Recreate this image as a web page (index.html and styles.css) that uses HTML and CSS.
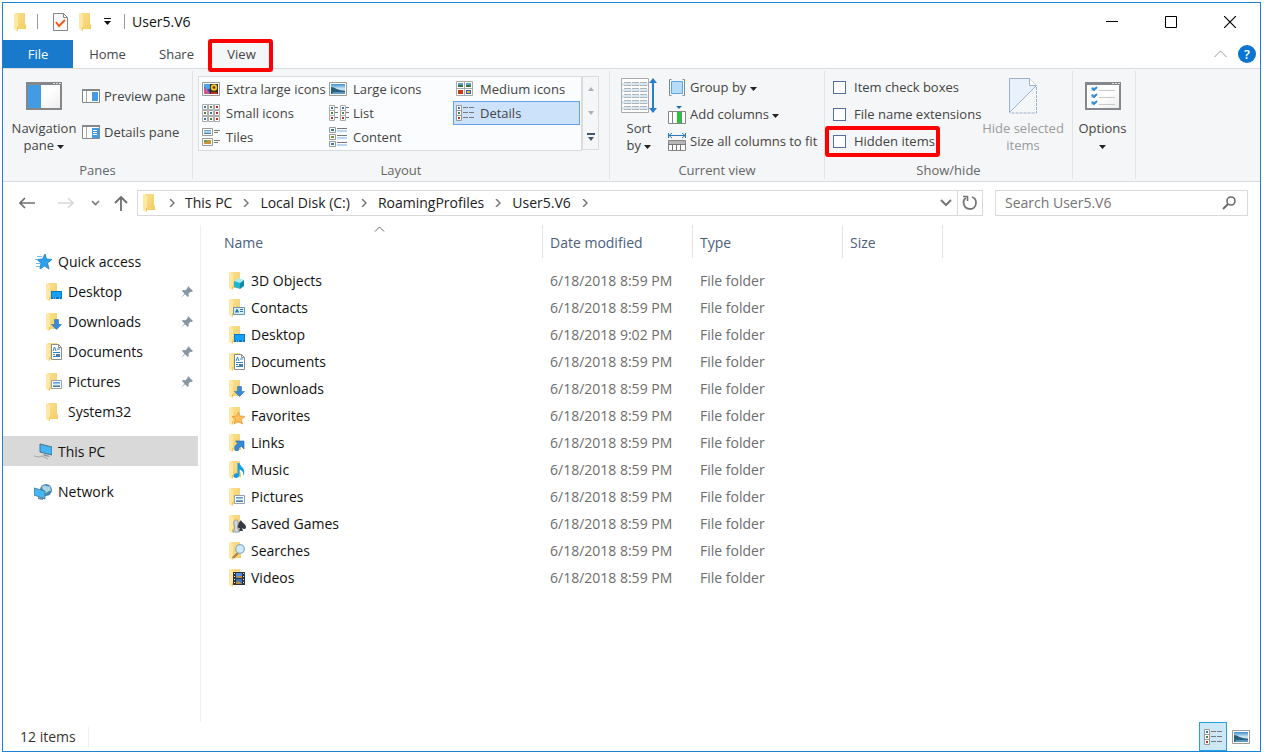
FILE: index.html
```html
<!DOCTYPE html>
<html lang="en">
<head>
<meta charset="utf-8">
<title>User5.V6</title>
<link rel="stylesheet" href="styles.css">
</head>
<body>
<svg class="defs" aria-hidden="true">
  <defs>
    <linearGradient id="gold" x1="0" x2="1" y1="0" y2="1"><stop offset="0" stop-color="#fbe08d"/><stop offset="1" stop-color="#f3cc63"/></linearGradient>
    <linearGradient id="sky" x1="0" x2="0" y1="0" y2="1"><stop offset="0" stop-color="#3f8fd0"/><stop offset=".5" stop-color="#d5ecf7"/><stop offset="1" stop-color="#1d5c86"/></linearGradient>
    <linearGradient id="paper" x1="0" x2="1" y1="0" y2="1"><stop offset=".5" stop-color="#fff"/><stop offset="1" stop-color="#ececec"/></linearGradient>
    <symbol id="folder" viewBox="0 0 18 18"><path d="M3 0h9v11l1 1v4H3z" fill="url(#gold)"/><path d="M1 0l4 2v12l-1 4-3-2z" fill="#fde8a6"/><path d="M4 14v4l1-1v-3z" fill="#f0c75d"/></symbol>
    <symbol id="mini-monitor" viewBox="0 0 18 18"><path d="M6 8h11v8H6z" fill="#0a78c8"/><path d="M7 9h9v5H7z" fill="#16a0f8"/><path d="M8 15h1m1 0h1m3 0h1" stroke="#bfe3ff"/></symbol>
    <symbol id="mini-down" viewBox="0 0 18 18"><path d="M9.500 6.500h4v5h3l-5 5-5-5h3z" fill="#3b8ad6" stroke="#2b74bd" stroke-width=".6"/></symbol>
    <symbol id="mini-doc" viewBox="0 0 18 18"><path d="M6.500 1.500h7l3 3v12h-10z" fill="#fff" stroke="#8b8b8b"/><path d="M13.500 1.500v3h3" fill="none" stroke="#8b8b8b"/><path d="M8 8l1.500-4L11 8m1-2h3m-7 3.500h7m-7 2h2m-2 2h7" stroke="#2d83c4" fill="none"/><path d="M11 11h4v2h-4z" fill="#55799a"/></symbol>
    <symbol id="mini-picture" viewBox="0 0 18 18"><path d="M6.500 7.500h10v8h-10z" fill="#fff" stroke="#999fa8"/><path d="M8 9h7v5H8z" fill="url(#sky)"/></symbol>
    <symbol id="mini-cube" viewBox="0 0 18 18"><path d="M6 9l5-3 5 2-4 3z" fill="#a6eef5"/><path d="M6 9l6 2v6l-6-2z" fill="#22b5cf"/><path d="M12 11l4-3v6l-4 3z" fill="#118aa9"/></symbol>
    <symbol id="mini-card" viewBox="0 0 18 18"><path d="M5.500 8.500h11v7h-11z" fill="#d8effa" stroke="#6a95ac"/><path d="M7 13.500c0-3 4-3 4 0z" fill="#2678a8"/><circle cx="9" cy="11" r="1" fill="#2678a8"/><path d="M12 10.500h3m-3 2h3" stroke="#36789d"/></symbol>
    <symbol id="mini-star" viewBox="0 0 18 18"><path d="M10.500 5l1.500 4 5 .5-3.800 3 1.300 4.500-4-2.500L6 17l1.500-4.500L4 9.500l4.800-.5z" fill="#ffc05c" stroke="#e8963a" stroke-width=".8"/></symbol>
    <symbol id="mini-link" viewBox="0 0 18 18"><path d="M7 16.500c-1-4 1-6 3-7L7.500 7H16v8l-2.500-2.500c-2.500.5-3 1.500-3 4z" fill="#348bd9" stroke="#1768ae" stroke-width=".6"/></symbol>
    <symbol id="mini-note" viewBox="0 0 18 18"><path d="M9.500 2h2c.5 3.500 6 5 4.500 11-.3 1-1 1.500-1 1.500.8-3-.5-5-3.500-6v5.500c0 3.500-6 4-6 1 0-2 2-3 4-2.500z" fill="#159bea"/></symbol>
    <symbol id="mini-game" viewBox="0 0 18 18"><path d="M13 5c1 3 5 4 5 7 0 2-2 3-4 1l1 3h-4l1-3c-2 1-4-1-3-3z" fill="#36393e"/><path d="M5 17c1-2 2-4 1.500-6C5 8 6 5 8 5s3 3 1.500 6c0 2 1 4 2 6z" fill="#d0d7de" stroke="#8d98a1"/></symbol>
    <symbol id="mini-lens" viewBox="0 0 18 18"><path d="M5 16l5-5" stroke="#aa7e51" stroke-width="2"/><circle cx="12" cy="7" r="4.300" fill="#cceafa" stroke="#93adbd" stroke-width="1.300"/></symbol>
    <symbol id="mini-film" viewBox="0 0 18 18"><path d="M5 3h12v13H5z" fill="#303237"/><path d="M8 4h6v5H8z" fill="#4d8ee0"/><path d="M8 10h6v5H8z" fill="#396ec0"/><path d="M8 7l3 2h3V7zM8 13l3-1 3 3H8z" fill="#b48c3b"/><path d="M6.500 4v12m9-12v12" stroke="#e5e5e5" stroke-dasharray="1 2"/></symbol>
    <symbol id="pin" viewBox="0 0 12 12"><path d="M7 0l5 5-1.500 1-1-.2-2 2 .3 2.200-1 1-2.800-2.800L0 12l3.500-4.500L1 5l1-1 2.500.3L6.500 2z" fill="#8896a3"/></symbol>
    <symbol id="chev" viewBox="0 0 6 8"><path d="M1 0l4 4-4 4" fill="none" stroke="#777" stroke-width="1.500"/></symbol>
    <symbol id="caret" viewBox="0 0 7 4"><path d="M0 0h7L3.500 4z" fill="#222"/></symbol>
    <symbol id="photo" viewBox="0 0 18 14"><path d="M.5.500h17v13H.5z" fill="#fff" stroke="#9a9a9a"/><path d="M2 2h14v10H2z" fill="url(#sky)"/><path d="M2 5c4 0 5 3 14 4v3H2z" fill="#275f7c"/><path d="M4 10h12v2H3z" fill="#5b9ac1"/></symbol>
    <symbol id="details" viewBox="0 0 18 16"><path d="M.5.500h5v15h-5zm0 5h5m-5 5h5" fill="#fff" stroke="#999"/><path d="M2 2h2v2H2z" fill="#3078b5"/><path d="M2 7h2v2H2z" fill="#537c4e"/><path d="M2 12h2v2H2z" fill="#bd3826"/><path d="M7 2.500h5m1 0h5m-11 5h5m1 0h5m-11 5h5m1 0h5" stroke="#77797b"/></symbol>
    <symbol id="tile" viewBox="0 0 6 6"><path d="M.5.500h5v5h-5z" fill="#fff" stroke="#aaa"/><path d="M2 2h2v2H2z" fill="currentColor"/></symbol>
  </defs>
</svg>

<div class="window">
  <header class="titlebar">
    <svg class="i18"><use href="#folder"/></svg>
    <span class="bar"></span>
    <button class="plain quick-check" aria-label="Properties"><svg width="15" height="18"><path d="M.5.500h10l4 4v13H.5z" fill="#f8f8f8" stroke="#858585"/><path d="M10.500.500v4h4" fill="none" stroke="#858585"/><path d="M3 9l3 4 6-6" fill="none" stroke="#ef5b1c" stroke-width="2"/></svg></button>
    <button class="plain quick-new" aria-label="New folder"><svg class="i18"><use href="#folder"/></svg></button>
    <button class="plain quick-menu" aria-label="Customize toolbar"><svg width="7" height="7"><path d="M0 0h7v1H0zM0 3h7L3.500 7z" fill="#111"/></svg></button>
    <span class="bar"></span>
    <h1 class="title">User5.V6</h1>
    <div class="controls">
      <button class="plain" aria-label="Minimize"><svg width="12" height="12"><path d="M0 5.500h12" stroke="#000"/></svg></button>
      <button class="plain" aria-label="Maximize"><svg width="12" height="12"><path d="M.5.500h11v11H.5z" stroke="#000" fill="none"/></svg></button>
      <button class="plain" aria-label="Close"><svg width="12" height="12"><path d="M0 0l12 12M12 0L0 12" stroke="#000" stroke-width="1.200"/></svg></button>
    </div>
  </header>

  <nav class="tabs">
    <button class="tab file">File</button>
    <button class="tab">Home</button>
    <button class="tab">Share</button>
    <button class="tab view marked">View</button>
    <div class="tab-tools">
      <button class="plain" aria-label="Collapse ribbon"><svg width="13" height="8"><path d="M.5 7L6.500 1l6 6" fill="none" stroke="#999"/></svg></button>
      <button class="help" aria-label="Help">?</button>
    </div>
  </nav>

  <section class="ribbon">
    <div class="group panes">
      <div class="content">
        <button class="big nav-pane"><svg width="36" height="28"><path d="M1 1h34v26H1z" fill="url(#paper)" stroke="#85878a" stroke-width="2"/><path d="M0 0h36v3H0z" fill="#85878a"/><path d="M27 1.500h2m1 0h2m1 0h2" stroke="#ddd"/><path d="M2 3h13v23H2z" fill="#429ce3"/></svg><span>Navigation<br>pane <svg class="caret"><use href="#caret"/></svg></span></button>
        <div class="stack wide">
          <button class="small"><svg width="18" height="14"><path d="M.5.500h17v13H.5z" fill="#fff" stroke="#85878a"/><path d="M0 0h18v2H0z" fill="#85878a"/><path d="M4.500 2v11" stroke="#aaa"/><path d="M10 3h6v9h-6z" fill="#429ce3"/></svg>Preview pane</button>
          <button class="small"><svg width="18" height="14"><path d="M.5.500h17v13H.5z" fill="#fff" stroke="#85878a"/><path d="M0 0h18v2H0z" fill="#85878a"/><path d="M4.500 2v11" stroke="#aaa"/><path d="M10 3h7v10h-7z" fill="#429ce3"/><path d="M11 5.500h4m-4 2h4m-4 2h4" stroke="#fff"/></svg>Details pane</button>
        </div>
      </div>
      <h2>Panes</h2>
    </div>

    <div class="group layout">
      <div class="content">
        <div class="gallery">
          <button class="choice"><svg width="18" height="14"><path d="M.5.500h17v13H.5z" fill="#fff" stroke="#999"/><path d="M2 2h14v10H2z" fill="#234b96"/><path d="M2 6l3 1 3 5H2z" fill="#d5538d"/><path d="M2 2h7v4L5 8 2 5z" fill="#4aa2ea"/><path d="M8 2h8v10H8z" fill="#3b2a20"/><circle cx="12" cy="5.500" r="3.200" fill="#f3c61f"/><circle cx="12" cy="5.500" r="1.300" fill="#632d22"/><path d="M9 10h6v2H9z" fill="#bd3126"/></svg>Extra large icons</button>
          <button class="choice"><svg width="18" height="14"><use href="#photo"/></svg>Large icons</button>
          <button class="choice"><svg width="18" height="16"><path d="M.5.500h16v14H.5zm8 0v14m-8-7h16" fill="#fff" stroke="#aaa"/><path d="M2 2h5v4H2zm8 0h5v4h-5z" fill="#55a7ca"/><path d="M2 4h5v2H2zm8 0h5v2h-5z" fill="#35733f"/><path d="M2 9h5v4H2z" fill="#c53b18"/><path d="M10 9h5v4h-5z" fill="#355fa9"/><path d="M11 10h3v2h-3z" fill="#e7bf36"/></svg>Medium icons</button>
          <button class="choice"><svg width="18" height="18"><g color="#3278a3"><use href="#tile" width="6" height="6"/><use href="#tile" x="6" y="6" width="6" height="6"/><use href="#tile" y="12" width="6" height="6"/></g><g color="#4d843a"><use href="#tile" x="6" width="6" height="6"/><use href="#tile" y="6" width="6" height="6"/><use href="#tile" x="6" y="12" width="6" height="6"/></g><g color="#b92d24"><use href="#tile" x="12" width="6" height="6"/><use href="#tile" x="12" y="6" width="6" height="6"/><use href="#tile" x="12" y="12" width="6" height="6"/></g></svg>Small icons</button>
          <button class="choice"><svg width="20" height="16"><g color="#3278a3"><use href="#tile" width="6" height="6"/><use href="#tile" x="11" width="6" height="6"/></g><g color="#4d843a"><use href="#tile" y="5" width="6" height="6"/><use href="#tile" x="11" y="5" width="6" height="6"/></g><g color="#b92d24"><use href="#tile" y="10" width="6" height="6"/><use href="#tile" x="11" y="10" width="6" height="6"/></g><path d="M6 2.500h3m8 0h3m-14 5h3m8 0h3m-14 5h3m8 0h3" stroke="#777"/></svg>List</button>
          <button class="choice selected"><svg width="18" height="16"><use href="#details"/></svg>Details</button>
          <button class="choice"><svg width="18" height="18"><path d="M.5.500h10v7H.5zm0 10h10v7H.5z" fill="#fff" stroke="#999"/><path d="M2 2h7v4H2z" fill="url(#sky)"/><path d="M2 12h7v4H2z" fill="#ca933e"/><path d="M2 12h3v2H2z" fill="#58a344"/><path d="M12 2.500h6m-6 2h4m-4 8h6m-6 2h4" stroke="#777"/></svg>Tiles</button>
          <button class="choice"><svg width="18" height="20"><path d="M.5.500h6v5h-6zm0 7h6v5h-6zm0 7h6v5h-6z" fill="#fff" stroke="#999"/><path d="M2 2h3v2H2zm0 14h3v2H2z" fill="#2d8095"/><path d="M2 9h3v2H2z" fill="#799438"/><path d="M8 1.500h10m-10 7h10m-10 7h10" stroke="#777"/><path d="M8 4h10m-10 7h10m-10 7h10" stroke="#75aef6"/></svg>Content</button>
        </div>
        <div class="scroll">
          <button class="plain" aria-label="Scroll up"><svg width="6" height="4"><path d="M0 4h6L3 0z" fill="#a8b0ba"/></svg></button>
          <button class="plain" aria-label="Scroll down"><svg width="6" height="4"><path d="M0 0h6L3 4z" fill="#a8b0ba"/></svg></button>
          <button class="plain" aria-label="More layouts"><svg width="8" height="8"><path d="M0 0h8v2H0zM1 4h6L4 8z" fill="#40566f"/></svg></button>
        </div>
      </div>
      <h2>Layout</h2>
    </div>

    <div class="group current">
      <div class="content">
        <button class="big sort"><svg width="36" height="36"><path d="M.5.500h27v34H.5z" fill="#fff" stroke="#aaa"/><path d="M1 5h26v3H1zm0 6h26v3H1zm0 6h26v3H1zm0 6h26v3H1zm0 6h26v3H1z" fill="#d6e8f3"/><path d="M3 4.500h23m-23 3h23m-23 3h23m-23 3h23m-23 3h23m-23 3h23m-23 3h23m-23 3h23m-23 3h23m-23 3h23" stroke="#b3b3b3" stroke-dasharray="7 1"/><path d="M32 3v29" stroke="#2a7fca" stroke-width="2"/><path d="M32 0l4 5h-8zm0 35l4-5h-8z" fill="#2a7fca"/></svg><span>Sort<br>by <svg class="caret"><use href="#caret"/></svg></span></button>
        <div class="stack">
          <button class="small"><svg width="18" height="18"><path d="M3.500.500h-2v16h2m11-16h2v16h-2" fill="none" stroke="#888"/><path d="M3.500 2.500h11v12h-11z" fill="#b5dcfb" stroke="#5ea6df"/></svg><span>Group by <svg class="caret"><use href="#caret"/></svg></span></button>
          <button class="small"><svg width="18" height="18"><path d="M.5 5.500h17v12H.5zm4 0v12m9-12v12" fill="#fff" stroke="#858585"/><path d="M9 6h4v11H9z" fill="#20cb31"/><path d="M8 0h6l-3 3z" fill="#286da8"/></svg><span>Add columns <svg class="caret"><use href="#caret"/></svg></span></button>
          <button class="small"><svg width="18" height="18"><path d="M.5 0v5m17-5v5M1 2.500h16M4 0L1 2.500 4 5m10-5l3 2.500L14 5" fill="none" stroke="#2b79b9"/><path d="M.5 7.500h17v10H.5z" fill="#fff" stroke="#858585"/><path d="M1 8h16v3H1z" fill="#b7b7b7"/><path d="M.5 11.500h17m-13 0v6m4-6v6m4-6v6" stroke="#777"/></svg>Size all columns to fit</button>
        </div>
      </div>
      <h2>Current view</h2>
    </div>

    <div class="group show">
      <div class="content">
        <div class="stack checks">
          <label><input type="checkbox">Item check boxes</label>
          <label><input type="checkbox">File name extensions</label>
          <label class="marked"><input type="checkbox">Hidden items</label>
        </div>
        <button class="big hide" disabled><svg width="28" height="36"><path d="M.5.500h20l7 7-27 27z" fill="#e8f1fc" stroke="#9ab0cc"/><path d="M20.500.500v7h7" fill="#fff" stroke="#9ab0cc"/><path d="M27.500 9v26H1" fill="none" stroke="#9ab0cc" stroke-dasharray="3 1"/></svg><span>Hide selected<br>items</span></button>
      </div>
      <h2>Show/hide</h2>
    </div>

    <div class="group options">
      <div class="content">
        <button class="big"><svg width="36" height="28"><path d="M1 1h34v26H1z" fill="url(#paper)" stroke="#85878a" stroke-width="2"/><path d="M0 0h36v3H0z" fill="#85878a"/><path d="M27 1.500h2m1 0h2m1 0h2" stroke="#ddd"/><path d="M6 5h4v4H6zm0 7h4v4H6zm0 7h4v4H6z" fill="#c7e0f4"/><path d="M7 6l2 2 3-3m-5 8l2 2 3-3m-5 8l2 2 3-3" fill="none" stroke="#2c89d4" stroke-width="1.800"/><path d="M14 8.500h16m-16 7h16m-16 7h16" stroke="#c9c9c9"/></svg><span>Options<br><svg class="caret"><use href="#caret"/></svg></span></button>
      </div>
    </div>
  </section>

  <div class="navbar">
    <button class="plain back" aria-label="Back"><svg width="16" height="12"><path d="M6 1L1 6l5 5M1 6h15" fill="none" stroke="#6d6d6d" stroke-width="1.600"/></svg></button>
    <button class="plain forward" aria-label="Forward"><svg width="16" height="12"><path d="M10 1l5 5-5 5M15 6H0" fill="none" stroke="#d8d8d8" stroke-width="1.600"/></svg></button>
    <button class="plain recent" aria-label="Recent locations"><svg width="9" height="6"><path d="M1 1l3.500 3.500L8 1" fill="none" stroke="#777" stroke-width="1.600"/></svg></button>
    <button class="plain up" aria-label="Up"><svg width="14" height="15"><path d="M1 7l6-6 6 6M7 1v14" fill="none" stroke="#6d6d6d" stroke-width="1.800"/></svg></button>
    <div class="address">
      <svg class="i18"><use href="#folder"/></svg>
      <svg class="chev"><use href="#chev"/></svg><a href="#">This PC</a>
      <svg class="chev"><use href="#chev"/></svg><a href="#">Local Disk (C:)</a>
      <svg class="chev"><use href="#chev"/></svg><a href="#">RoamingProfiles</a>
      <svg class="chev"><use href="#chev"/></svg><a href="#">User5.V6</a>
      <svg class="chev"><use href="#chev"/></svg>
      <button class="plain drop" aria-label="Previous locations"><svg width="12" height="8"><path d="M1 1l5 5 5-5" fill="none" stroke="#777" stroke-width="2"/></svg></button>
      <button class="plain refresh" aria-label="Refresh"><svg width="16" height="16"><path d="M10 2c6 2 5 12-2 12S0 5 4 3" fill="none" stroke="#777" stroke-width="1.800"/><path d="M1 1.500h4.500V6" fill="none" stroke="#777" stroke-width="1.600"/></svg></button>
    </div>
    <div class="search">
      <input type="text" placeholder="Search User5.V6" aria-label="Search User5.V6">
      <svg width="14" height="14"><circle cx="9" cy="5" r="4" fill="none" stroke="#6b6b6b" stroke-width="1.600"/><path d="M6 8l-5 5" stroke="#6b6b6b" stroke-width="2"/></svg>
    </div>
  </div>

  <div class="body">
    <aside class="sidebar">
      <ul>
        <li><svg class="i18"><path d="M11 1l1.500 5 5.500.5-4.500 3.500 1.500 6-4.500-3L6 16l1-6-4-3.500 5.500-.5z" fill="#2ba1ed" stroke="#1b7bc0" stroke-width=".8"/><path d="M3 3.500h5M1 6.500h3M2 10.500h4m-4 3h4" stroke="#68bdf3"/></svg>Quick access</li>
        <li class="sub"><svg class="i18"><use href="#folder"/><use href="#mini-monitor"/></svg>Desktop<svg class="pin"><use href="#pin"/></svg></li>
        <li class="sub"><svg class="i18"><use href="#folder"/><use href="#mini-down"/></svg>Downloads<svg class="pin"><use href="#pin"/></svg></li>
        <li class="sub"><svg class="i18"><use href="#folder"/><use href="#mini-doc"/></svg>Documents<svg class="pin"><use href="#pin"/></svg></li>
        <li class="sub"><svg class="i18"><use href="#folder"/><use href="#mini-picture"/></svg>Pictures<svg class="pin"><use href="#pin"/></svg></li>
        <li class="sub"><svg class="i18"><use href="#folder"/></svg>System32</li>
      </ul>
      <ul><li class="current-place"><svg class="i18"><path d="M6 1l12 3v8l-12-3z" fill="#42b5f5" stroke="#4a7085"/><path d="M9 11l5 1 2 2-6-1z" fill="#899aa5"/><path d="M0 13l5 1 3-1 6 3" fill="none" stroke="#a7a7a7"/></svg>This PC</li></ul>
      <ul><li><svg class="i18"><circle cx="12" cy="7" r="6" fill="#4a86ad"/><path d="M8 4c4-4 5 1 8-1l1 5c-4-1-4 4-7 2z" fill="#a9d5e5"/><path d="M0 5l11 3v8L0 12z" fill="#43b6f5" stroke="#43718b" stroke-width=".8"/><path d="M4 14l5 1v2l-5-1z" fill="#6e8897"/></svg>Network</li></ul>
    </aside>
    <main class="files">
      <table>
        <colgroup><col class="c-name"><col class="c-wide"><col class="c-wide"><col class="c-size"></colgroup>
        <thead><tr><th class="name">Name<svg class="sorted" width="11" height="6"><path d="M1 5.500L5.500 1 10 5.500" fill="none" stroke="#666"/></svg></th><th>Date modified</th><th>Type</th><th>Size</th></tr></thead>
        <tbody>
          <tr><td><svg class="i18"><use href="#folder"/><use href="#mini-cube"/></svg>3D Objects</td><td>6/18/2018 8:59 PM</td><td>File folder</td><td></td></tr>
          <tr><td><svg class="i18"><use href="#folder"/><use href="#mini-card"/></svg>Contacts</td><td>6/18/2018 8:59 PM</td><td>File folder</td><td></td></tr>
          <tr><td><svg class="i18"><use href="#folder"/><use href="#mini-monitor"/></svg>Desktop</td><td>6/18/2018 9:02 PM</td><td>File folder</td><td></td></tr>
          <tr><td><svg class="i18"><use href="#folder"/><use href="#mini-doc"/></svg>Documents</td><td>6/18/2018 8:59 PM</td><td>File folder</td><td></td></tr>
          <tr><td><svg class="i18"><use href="#folder"/><use href="#mini-down"/></svg>Downloads</td><td>6/18/2018 8:59 PM</td><td>File folder</td><td></td></tr>
          <tr><td><svg class="i18"><use href="#folder"/><use href="#mini-star"/></svg>Favorites</td><td>6/18/2018 8:59 PM</td><td>File folder</td><td></td></tr>
          <tr><td><svg class="i18"><use href="#folder"/><use href="#mini-link"/></svg>Links</td><td>6/18/2018 8:59 PM</td><td>File folder</td><td></td></tr>
          <tr><td><svg class="i18"><use href="#folder"/><use href="#mini-note"/></svg>Music</td><td>6/18/2018 8:59 PM</td><td>File folder</td><td></td></tr>
          <tr><td><svg class="i18"><use href="#folder"/><use href="#mini-picture"/></svg>Pictures</td><td>6/18/2018 8:59 PM</td><td>File folder</td><td></td></tr>
          <tr><td><svg class="i18"><use href="#folder"/><use href="#mini-game"/></svg>Saved Games</td><td>6/18/2018 8:59 PM</td><td>File folder</td><td></td></tr>
          <tr><td><svg class="i18"><use href="#folder"/><use href="#mini-lens"/></svg>Searches</td><td>6/18/2018 8:59 PM</td><td>File folder</td><td></td></tr>
          <tr><td><svg class="i18"><use href="#folder"/><use href="#mini-film"/></svg>Videos</td><td>6/18/2018 8:59 PM</td><td>File folder</td><td></td></tr>
        </tbody>
      </table>
    </main>
  </div>

  <footer class="status">
    <span class="count">12 items</span>
    <button class="plain mode active" aria-label="Details view"><svg width="18" height="16"><use href="#details"/></svg></button>
    <button class="plain mode" aria-label="Large icons view"><svg width="18" height="14"><use href="#photo"/></svg></button>
  </footer>
</div>
</body>
</html>
```
FILE: styles.css
```css
* { box-sizing: border-box; }
body { margin: 0; background: #fff; color: #111; font: 14px/20px "Open Sans", "Noto Sans", sans-serif; }
button, input { font: inherit; color: inherit; margin: 0; }
button { background: none; border: 0; padding: 0; }
h1, h2, ul { margin: 0; padding: 0; font-weight: 400; font-size: inherit; list-style: none; }
svg { flex: none; display: block; }
a { color: inherit; text-decoration: none; }
.defs { position: absolute; width: 0; height: 0; }
.i18 { width: 18px; height: 18px; }
.plain { display: flex; align-items: center; justify-content: center; }
.caret { display: inline-block; width: 7px; height: 4px; vertical-align: middle; }

.window { display: flex; flex-direction: column; min-height: calc(100vh - 6px); margin: 2px 4px 4px 2px; border: 1px solid #1883d7; }

/* title bar */
.titlebar { display: flex; align-items: center; height: 37px; padding-left: 10px; }
.titlebar .bar { width: 1px; height: 15px; background: #999; margin-left: 6px; }
.quick-check { margin-left: 15px; }
.quick-new { margin-left: 10px; }
.quick-menu { margin-left: 8px; }
.quick-menu + .bar { margin-left: 13px; }
.titlebar .title { margin-left: 7px; }
.controls { display: flex; align-self: stretch; margin-left: auto; padding-right: 1px; }
.controls .plain { width: 59px; }

/* tabs */
.tabs { display: flex; height: 28px; font-size: 13px; color: #444; }
.tab { width: 69px; }
.tab.file { width: 70px; background: #1979ca; color: #fff; }
.tab.view { width: 61px; background: #f5f6f7; }
.marked { position: relative; }
.marked::after { content: ""; position: absolute; border: 4px solid #f00; border-radius: 3px; pointer-events: none; z-index: 1; }
.tab.marked::after { inset: -1px -1px -4px -3px; }
.tab-tools { display: flex; align-items: center; gap: 11px; margin-left: auto; padding-right: 4px; }
.help { width: 18px; height: 18px; border-radius: 50%; background: #0a74d1; color: #fff; font-size: 13px; font-weight: 600; line-height: 18px; }

/* ribbon */
.ribbon { display: flex; height: 114px; padding: 2px 0; background: #f5f6f7; border: solid #dadbdc; border-width: 1px 0; font-size: 13px; line-height: 17px; color: #444; }
.group { display: flex; flex-direction: column; border-right: 1px solid #e2e3e4; }
.group h2 { text-align: center; line-height: 17px; color: #666; }
.content { display: flex; flex: 1; align-items: flex-start; }
.big { display: flex; flex-direction: column; align-items: center; gap: 10px; padding-top: 11px; white-space: nowrap; }
.small { display: flex; align-items: center; gap: 4px; white-space: nowrap; }
.stack { display: grid; grid-auto-rows: 27px; padding-top: 3px; }
.stack.wide { grid-auto-rows: 36px; padding-top: 7px; }
.panes { width: 190px; }
.nav-pane { width: 79px; padding-left: 3px; }
.layout { width: 417px; }
.layout .content { padding: 5px 10px 0 5px; }
.gallery { display: grid; flex: 1; grid-template-columns: repeat(3, 127px); grid-auto-rows: 24px; height: 75px; border: 1px solid #dadbdc; background: #fbfcfd; }
.choice { display: grid; grid-template-columns: 24px 1fr; align-items: center; text-align: left; white-space: nowrap; padding-left: 3px; border: 1px solid transparent; border-left-width: 0; }
.choice.selected { padding-left: 2px; border: 1px solid #62a2e4; background: #cce2fb; }
.scroll { display: grid; grid-template-rows: repeat(3, 1fr); width: 17px; height: 74px; border: 1px solid #dadbdc; }
.current { width: 215px; }
.sort { width: 58px; }
.big.sort, .big.hide { padding-top: 7px; gap: 6px; }
.show { width: 248px; }
.checks { width: 149px; padding: 3px 0 0 8px; }
.checks label { display: flex; align-items: center; gap: 8px; white-space: nowrap; }
.checks label.marked::after { inset: -2px 32px -2px -8px; }
.checks label.marked { justify-self: start; }
.checks label.marked::after { right: -5px; }
.checks input { appearance: none; width: 13px; height: 13px; border: 1px solid #54719c; background: #fff; }
.hide { flex: 1; color: #9a9b9d; }
.options { width: 63px; }
.options .big { flex: 1; padding-right: 3px; }

/* navigation bar */
.navbar { display: flex; align-items: center; height: 43px; padding: 0 12px 1px 16px; }
.forward { margin-left: 23px; }
.recent { margin-left: 17px; }
.up { margin-left: 14px; }
.address { display: flex; align-items: center; flex: 1; height: 26px; margin-left: 9px; padding-left: 4px; border: 1px solid #d9d9d9; white-space: nowrap; color: #222; }
.chev { width: 6px; height: 8px; margin: 0 11px; }
.address .i18 + .chev { margin: 0 10px 0 9px; }
.drop { width: 22px; margin-left: auto; align-self: stretch; }
.refresh { width: 25px; align-self: stretch; border-left: 1px solid #d9d9d9; }
.search { display: flex; align-items: center; width: 253px; height: 26px; margin-left: 12px; padding: 0 11px 0 9px; border: 1px solid #d9d9d9; }
.search input { flex: 1; min-width: 0; border: 0; padding: 0; background: none; }
.search input::placeholder { color: #757575; opacity: 1; }

/* body */
.body { display: flex; flex: 1; }
.sidebar { display: flex; flex-direction: column; gap: 10px; width: 198px; padding: 21px 2px 0 0; border-right: 1px solid #f0f0f0; }
.sidebar li { display: flex; align-items: center; gap: 6px; height: 30px; padding: 1px 0 0 31px; }
.sidebar li.sub { gap: 5px; padding: 1px 5px 0 42px; }
.sidebar .pin { width: 12px; height: 12px; margin-left: auto; }
.sidebar .current-place { background: #d9d9d9; }
.files { flex: 1; }
table { table-layout: fixed; width: 742px; border-collapse: separate; border-spacing: 0; }
.c-name { width: 342px; }
.c-wide { width: 150px; }
.c-size { width: 100px; }
th { height: 33px; padding: 2px 7px 0; text-align: left; font-weight: 400; color: #4c607a; border-right: 1px solid #e3e3e3; }
th.name { position: relative; padding-left: 23px; }
.sorted { position: absolute; top: 1px; left: 50%; margin-left: 2px; }
td { height: 27px; padding: 0 7px; color: #6d6d6d; white-space: nowrap; }
td:first-child { display: flex; align-items: center; gap: 5px; padding-left: 27px; color: #111; }
tbody::before { content: ""; display: block; height: 9px; }

/* status bar */
.status { display: flex; align-items: center; height: 29px; padding: 0 5px 0 17px; color: #333; }
.count { padding-right: 12px; margin-right: auto; border-right: 1px solid #f0f0f0; }
.mode { width: 28px; height: 29px; }
.mode.active { background: #cce8f6; border: 1px solid #26a0da; }
```
